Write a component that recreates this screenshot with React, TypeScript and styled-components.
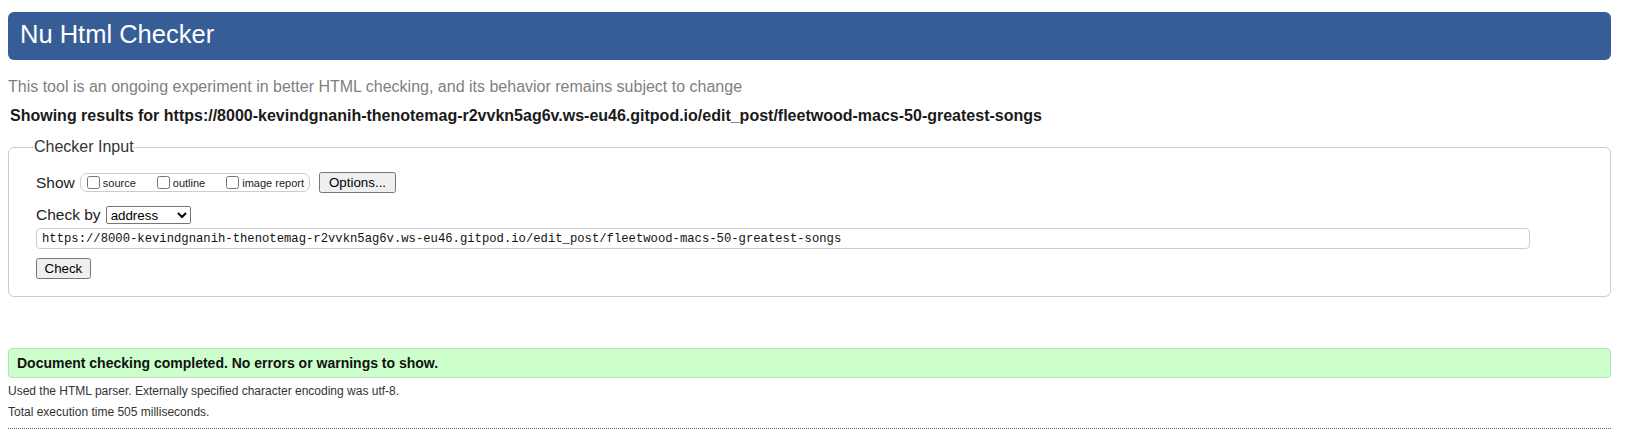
import React from "react";
import styled, { createGlobalStyle } from "styled-components";

const GlobalStyle = createGlobalStyle`
  body {
    margin: 0;
    background: #fff;
    color: #222;
    font-family: "Liberation Sans", Arial, sans-serif;
  }
`;

const Page = styled.div`
  padding: 12px 21px 0 8px;
`;

const Header = styled.h1`
  margin: 0;
  height: 48px;
  box-sizing: border-box;
  padding: 0 0 4px 12px;
  line-height: 44px;
  background: #365d95;
  color: #fff;
  font-size: 25.5px;
  font-weight: normal;
  border-radius: 6px;
`;

const Intro = styled.p`
  margin: 18px 0 0;
  font-size: 16px;
  line-height: 18px;
  color: #808080;
`;

const Results = styled.p`
  margin: 11px 0 0 2px;
  font-size: 16px;
  line-height: 18px;
  font-weight: bold;
  color: #1a1a1a;
`;

const Fieldset = styled.fieldset`
  margin: 13px 0 0;
  padding: 0 27px 17px;
  border: 1px solid #ccc;
  border-radius: 6px;
`;

const Legend = styled.legend`
  margin-left: -2px;
  padding: 0;
  font-size: 16px;
  line-height: 18px;
  color: #333;
`;

const Row = styled.div<{ $top: number }>`
  display: flex;
  align-items: center;
  margin-top: ${(p) => p.$top}px;
`;

const Label = styled.span`
  font-size: 15.5px;
  margin-right: 5px;
`;

const Group = styled.div`
  display: flex;
  align-items: center;
  height: 19px;
  box-sizing: border-box;
  padding: 0 5px 0 2px;
  border: 1px solid #ccc;
  border-radius: 7px;
  margin-right: 9px;
`;

const Choice = styled.label<{ $last?: boolean }>`
  display: flex;
  align-items: center;
  font-size: 11px;
  margin-right: ${(p) => (p.$last ? 0 : 17)}px;

  input {
    width: 13px;
    height: 13px;
    margin: 0 3px 0 4px;
  }
`;

const Button = styled.button<{ $pad?: number }>`
  height: 21px;
  padding: 0 ${(p) => p.$pad ?? 8}px;
  font-family: "Liberation Sans", Arial, sans-serif;
  font-size: 13.33px;
  color: #000;
`;

const Select = styled.select`
  width: 85px;
  height: 18px;
  font-family: "Liberation Sans", Arial, sans-serif;
  font-size: 13.33px;
  color: #000;
`;

const UrlInput = styled.input`
  width: 1494px;
  height: 21px;
  box-sizing: border-box;
  padding: 0 5px;
  border: 1px solid #ccc;
  border-radius: 4px;
  font-family: "Liberation Mono", "DejaVu Sans Mono", monospace;
  font-size: 12.22px;
  color: #111;
`;

const Success = styled.div`
  margin-top: 51px;
  height: 30px;
  box-sizing: border-box;
  padding-left: 8px;
  display: flex;
  align-items: center;
  background: #ccffcc;
  border: 1px solid #bbddbb;
  border-radius: 4px;
  font-size: 14px;
  font-weight: bold;
  color: #111;
`;

const Note = styled.p<{ $top: number }>`
  margin: ${(p) => p.$top}px 0 0;
  font-size: 12px;
  line-height: 14px;
  color: #333;
`;

const Rule = styled.hr`
  margin: 9px 0 0;
  border: 0;
  border-top: 1px dotted #666;
`;

const url =
  "https://8000-kevindgnanih-thenotemag-r2vvkn5ag6v.ws-eu46.gitpod.io/edit_post/fleetwood-macs-50-greatest-songs";

export default function App() {
  return (
    <Page>
      <GlobalStyle />
      <Header>Nu Html Checker</Header>
      <Intro>
        This tool is an ongoing experiment in better HTML checking, and its
        behavior remains subject to change
      </Intro>
      <Results>Showing results for {url}</Results>
      <Fieldset>
        <Legend>Checker Input</Legend>
        <Row $top={16}>
          <Label>Show</Label>
          <Group>
            <Choice>
              <input type="checkbox" />
              source
            </Choice>
            <Choice>
              <input type="checkbox" />
              outline
            </Choice>
            <Choice $last>
              <input type="checkbox" />
              image report
            </Choice>
          </Group>
          <Button>Options...</Button>
        </Row>
        <Row $top={13}>
          <Label>Check by</Label>
          <Select defaultValue="address">
            <option value="address">address</option>
            <option value="file">file upload</option>
            <option value="text">text input</option>
          </Select>
        </Row>
        <Row $top={4}>
          <UrlInput type="url" defaultValue={url} />
        </Row>
        <Row $top={9}>
          <Button $pad={6.5}>Check</Button>
        </Row>
      </Fieldset>
      <Success>Document checking completed. No errors or warnings to show.</Success>
      <Note $top={6}>
        Used the HTML parser. Externally specified character encoding was
        utf-8.
      </Note>
      <Note $top={7}>Total execution time 505 milliseconds.</Note>
      <Rule />
    </Page>
  );
}
